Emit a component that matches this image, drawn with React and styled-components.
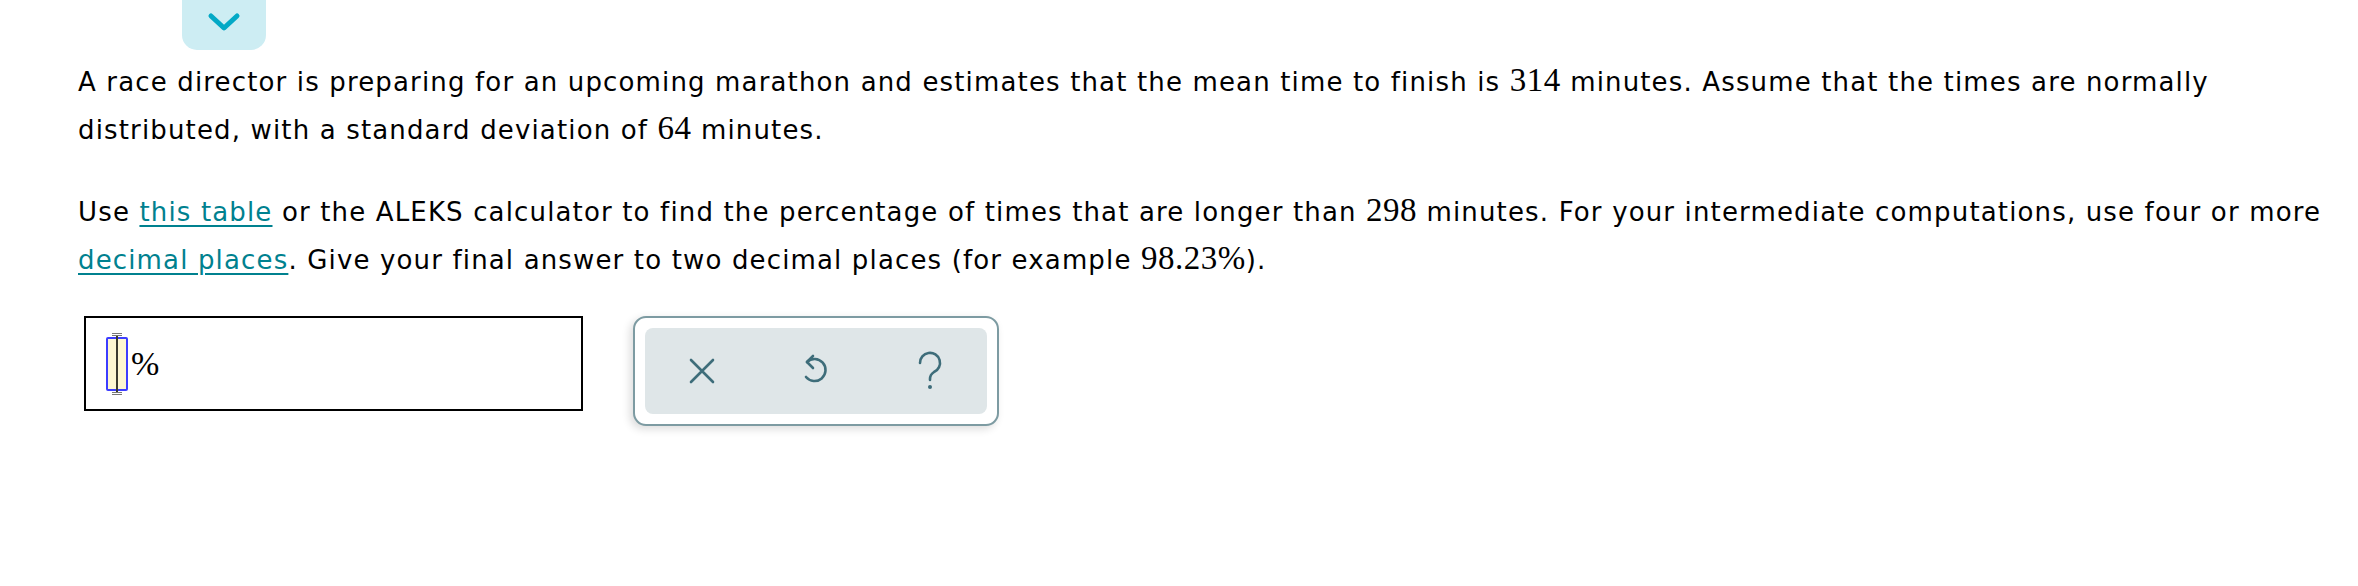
import React from "react";
import styled, { createGlobalStyle } from "styled-components";

const GlobalStyle = createGlobalStyle`
  body {
    margin: 0;
    background: #fff;
    font-family: "DejaVu Sans", Verdana, sans-serif;
    color: #000;
  }
`;

const Page = styled.div`
  width: 2358px;
  min-height: 586px;
  box-sizing: border-box;
`;

const TabRow = styled.div`
  display: flex;
  padding-left: 182px;
`;

// Collapse tab at the very top of the question.
const CollapseTab = styled.button`
  width: 84px;
  height: 50px;
  border: none;
  padding: 0;
  background: #cdedf3;
  border-radius: 0 0 15px 15px;
  display: flex;
  align-items: center;
  justify-content: center;
  padding-bottom: 6px;
  cursor: pointer;
`;

const Question = styled.div`
  width: 2262px;
  padding-left: 78px;
  margin-top: 8px;
`;

const Paragraph = styled.p`
  margin: 0 0 ${(p) => (p.last ? "32px" : "34px")};
  font-size: 26px;
  letter-spacing: 1.15px;
  line-height: 48px;
`;

// Numbers are typeset like math, in a serif face.
const MathNum = styled.span`
  font-family: "Liberation Serif", "Times New Roman", serif;
  font-size: 33px;
  line-height: 1;
  letter-spacing: 0.5px;
`;

const Link = styled.a`
  color: #00818f;
  text-decoration: underline;
  text-underline-offset: 4px;
  cursor: pointer;
`;

const AnswerRow = styled.div`
  display: flex;
  align-items: flex-start;
  gap: 50px;
  padding-left: 84px;
`;

const AnswerBox = styled.div`
  width: 499px;
  height: 95px;
  box-sizing: border-box;
  border: 2px solid #000;
  display: flex;
  align-items: center;
  padding-left: 20px;
`;

const Cursor = styled.span`
  position: relative;
  width: 22px;
  height: 54px;
  box-sizing: border-box;
  border: 2px solid #3d3dff;
  border-radius: 2px;
  background: #fdf7d2;
  display: inline-block;

  &::before {
    content: "";
    position: absolute;
    left: 8px;
    top: -4px;
    bottom: -4px;
    width: 2px;
    background: #3a3a30;
  }
`;

const Serif = styled.span`
  position: absolute;
  left: 4px;
  width: 10px;
  height: 3px;
  border-top: 1px solid #777;
  border-bottom: 1px solid #777;
  box-sizing: border-box;
  top: ${(p) => (p.bottom ? "auto" : "-6px")};
  bottom: ${(p) => (p.bottom ? "-6px" : "auto")};
`;

const Percent = styled.span`
  font-family: "Liberation Serif", "Times New Roman", serif;
  font-size: 34px;
  margin-left: 3px;
`;

const ToolPanel = styled.div`
  width: 366px;
  height: 110px;
  box-sizing: border-box;
  border: 2px solid #7d9ba2;
  border-radius: 13px;
  background: #fff;
  padding: 10px;
  box-shadow: -3px 3px 8px rgba(0, 0, 0, 0.14);
`;

const ToolInner = styled.div`
  height: 100%;
  background: #dfe6e8;
  border-radius: 8px;
  display: grid;
  grid-template-columns: repeat(3, 1fr);
`;

const ToolButton = styled.button`
  border: none;
  background: transparent;
  display: flex;
  align-items: center;
  justify-content: center;
  padding: 0;
  cursor: pointer;
`;

const Chevron = () => (
  <svg width="34" height="20" viewBox="0 0 34 20">
    <path
      d="M4 4 L17 16 L30 4"
      fill="none"
      stroke="#03a9c6"
      strokeWidth="5"
      strokeLinecap="round"
      strokeLinejoin="round"
    />
  </svg>
);

const iconStroke = "#3e6d7a";

const ClearIcon = () => (
  <svg width="30" height="30" viewBox="0 0 30 30">
    <path
      d="M4 4 L26 26 M26 4 L4 26"
      stroke={iconStroke}
      strokeWidth="2.6"
      strokeLinecap="round"
    />
  </svg>
);

const UndoIcon = () => (
  <svg width="34" height="36" viewBox="0 0 34 36">
    <path
      d="M14 3 L8 9 L14 15"
      fill="none"
      stroke={iconStroke}
      strokeWidth="2.6"
      strokeLinecap="round"
      strokeLinejoin="round"
    />
    <path
      d="M8 9 A11 11 0 1 1 7 24"
      fill="none"
      stroke={iconStroke}
      strokeWidth="2.6"
      strokeLinecap="round"
    />
  </svg>
);

const HelpIcon = () => (
  <svg width="30" height="40" viewBox="0 0 30 40">
    <path
      d="M5 12 A10 10 0 1 1 19 21 C16 23 15 25 15 28 V29"
      fill="none"
      stroke={iconStroke}
      strokeWidth="2.6"
      strokeLinecap="round"
    />
    <circle cx="15" cy="36" r="2" fill={iconStroke} />
  </svg>
);

const App = () => (
  <Page>
    <GlobalStyle />
    <TabRow>
      <CollapseTab aria-label="Collapse">
        <Chevron />
      </CollapseTab>
    </TabRow>
    <Question>
      <Paragraph>
        A race director is preparing for an upcoming marathon and estimates
        that the mean time to finish is <MathNum>314</MathNum> minutes. Assume
        that the times are normally distributed, with a standard deviation of{" "}
        <MathNum>64</MathNum> minutes.
      </Paragraph>
      <Paragraph last>
        Use <Link>this table</Link> or the ALEKS calculator to find the
        percentage of times that are longer than <MathNum>298</MathNum>{" "}
        minutes. For your intermediate computations, use four or more{" "}
        <Link>decimal places</Link>. Give your final answer to two decimal
        places (for example <MathNum>98.23%</MathNum>).
      </Paragraph>
    </Question>
    <AnswerRow>
      <AnswerBox>
        <Cursor>
          <Serif />
          <Serif bottom />
        </Cursor>
        <Percent>%</Percent>
      </AnswerBox>
      <ToolPanel>
        <ToolInner>
          <ToolButton aria-label="Clear">
            <ClearIcon />
          </ToolButton>
          <ToolButton aria-label="Undo">
            <UndoIcon />
          </ToolButton>
          <ToolButton aria-label="Help">
            <HelpIcon />
          </ToolButton>
        </ToolInner>
      </ToolPanel>
    </AnswerRow>
  </Page>
);

export default App;
